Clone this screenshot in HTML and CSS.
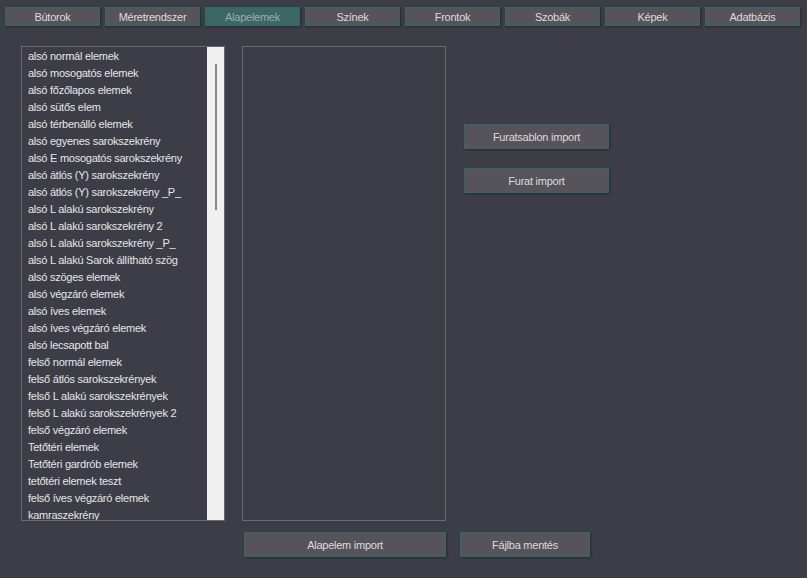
FILE: index.html
```html
<!DOCTYPE html>
<html lang="hu">
<head>
  <meta charset="UTF-8" />
  <title>Alapelemek</title>
  <link rel="stylesheet" href="styles.css">
</head>
<body>
  <nav class="tabs">
    <button class="tab">Bútorok</button>
    <button class="tab">Méretrendszer</button>
    <button class="tab active">Alapelemek</button>
    <button class="tab">Színek</button>
    <button class="tab">Frontok</button>
    <button class="tab">Szobák</button>
    <button class="tab">Képek</button>
    <button class="tab">Adatbázis</button>
  </nav>

  <div class="main">
    <div class="listbox">
      <ul class="items">
        <li>alsó normál elemek</li>
        <li>alsó mosogatós elemek</li>
        <li>alsó főzőlapos elemek</li>
        <li>alsó sütős elem</li>
        <li>alsó térbenálló elemek</li>
        <li>alsó egyenes sarokszekrény</li>
        <li>alsó E mosogatós sarokszekrény</li>
        <li>alsó átlós (Y) sarokszekrény</li>
        <li>alsó átlós (Y) sarokszekrény _P_</li>
        <li>alsó L alakú sarokszekrény</li>
        <li>alsó L alakú sarokszekrény 2</li>
        <li>alsó L alakú sarokszekrény _P_</li>
        <li>alsó L alakú Sarok állítható szög</li>
        <li>alsó szöges elemek</li>
        <li>alsó végzáró elemek</li>
        <li>alsó íves elemek</li>
        <li>alsó íves végzáró elemek</li>
        <li>alsó lecsapott bal</li>
        <li>felső normál elemek</li>
        <li>felső átlós sarokszekrények</li>
        <li>felső L alakú sarokszekrények</li>
        <li>felső L alakú sarokszekrények 2</li>
        <li>felső végzáró elemek</li>
        <li>Tetőtéri elemek</li>
        <li>Tetőtéri gardrób elemek</li>
        <li>tetőtéri elemek teszt</li>
        <li>felső íves végzáró elemek</li>
        <li>kamraszekrény</li>
      </ul>
      <div class="scrollbar"><div class="thumb"></div></div>
    </div>

    <div class="preview"></div>

    <div class="side">
      <button class="btn wide">Furatsablon import</button>
      <button class="btn wide">Furat import</button>
    </div>
  </div>

  <div class="bottom">
    <button class="btn import">Alapelem import</button>
    <button class="btn save">Fájlba mentés</button>
  </div>
</body>
</html>
```

FILE: styles.css
```css
* {
  margin: 0;
  padding: 0;
  box-sizing: border-box;
}
body {
  background: #3d3d47;
  color: #e6e6e6;
  font-family: "Liberation Sans", Arial, sans-serif;
  font-size: 11px;
  letter-spacing: -0.25px;
  width: 807px;
  height: 578px;
  overflow: hidden;
}

/* Gombok */
.tab,
.btn {
  background: #57535a;
  border: 1px solid #2f6b66;
  color: #dcdcdc;
  font-family: inherit;
  font-size: 11px;
  letter-spacing: -0.25px;
  box-shadow: 1px 1px 2px rgba(0, 0, 0, 0.35);
}

.tabs {
  display: flex;
  gap: 5px;
  padding: 7px 0 0 5px;
}
.tab {
  width: 95px;
  height: 19px;
}
.tab.active {
  background: #3b6764;
  color: #9eaaa8;
}

.main {
  display: flex;
  align-items: flex-start;
  padding: 20px 0 0 21px;
}

.listbox {
  display: flex;
  width: 204px;
  height: 475px;
  border: 1px solid #6a6a6a;
}
.items {
  list-style: none;
  flex: 1;
  overflow: hidden;
  padding-top: 1px;
}
.items li {
  height: 17px;
  line-height: 17px;
  padding-left: 6px;
  white-space: nowrap;
}
.scrollbar {
  width: 17px;
  background: #f0f0f0;
  padding-top: 17px;
}
.thumb {
  width: 2px;
  height: 146px;
  margin-left: 8px;
  background: #888;
}

.preview {
  width: 204px;
  height: 475px;
  margin-left: 17px;
  border: 1px solid #6a6a6a;
}

.side {
  display: flex;
  flex-direction: column;
  gap: 19px;
  margin: 78px 0 0 18px;
}
.btn {
  height: 25px;
}
.btn.wide {
  width: 145px;
}

.bottom {
  display: flex;
  gap: 14px;
  padding: 11px 0 0 244px;
}
.btn.import {
  width: 202px;
}
.btn.save {
  width: 130px;
}
```
